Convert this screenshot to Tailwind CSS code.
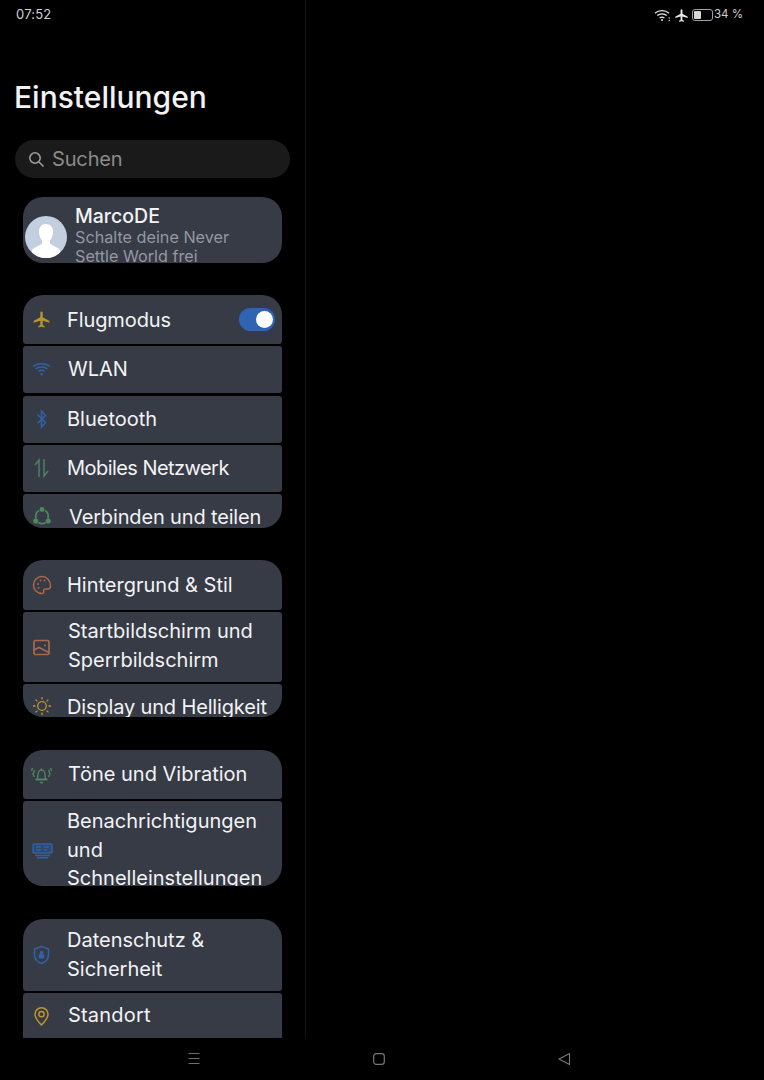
<!DOCTYPE html>
<html lang="de">
<head>
<meta charset="utf-8">
<script src="https://cdn.jsdelivr.net/npm/@tailwindcss/browser@4"></script>
</head>
<body class="bg-black">
<div class="relative w-[764px] h-[1080px] bg-black overflow-hidden font-['Inter','Noto_Sans',sans-serif] text-[#f2f3f5]">
  <!-- Status bar -->
  <div class="absolute top-0 left-0 right-0 h-[30px] flex items-center justify-between pl-[16px] pr-[21px] text-[11.5px] text-[#d0d0d0] z-10">
    <span class="text-[13px] tracking-[0.2px]">07:52</span>
    <div class="flex items-center">
      <svg class="w-[17px] h-[14px] mr-[3px]" viewBox="0 0 17 14" fill="none" stroke="#e8e8e8" stroke-width="1.3"><path d="M1 5.200C4.600 1.800 11.400 1.800 15 5.200"/><path d="M3.300 7.600C5.900 5.300 10.100 5.300 12.700 7.600"/><path d="M5.600 10C7 8.900 9 8.900 10.400 10"/><circle cx="8" cy="12" r="1" fill="#e8e8e8" stroke="none"/><circle cx="15.200" cy="12.400" r=".7" fill="#e8e8e8" stroke="none"/><circle cx="15.200" cy="10" r=".7" fill="#e8e8e8" stroke="none"/></svg>
      <svg class="w-[15px] h-[15px] mr-[3px]" viewBox="0 0 24 24" fill="#e8e8e8"><path d="M22 16v-2l-8.500-5V3.500A1.500 1.500 0 0 0 12 2a1.500 1.500 0 0 0-1.500 1.500V9L2 14v2l8.500-2.500V19L8 20.500V22l4-1 4 1v-1.500L13.500 19v-5.500z"/></svg>
      <div class="w-[21px] h-[12px] border border-[#9f9f9f] rounded-[3px] mr-[1px] p-[1px]"><div class="w-[7px] h-full bg-[#d8d8d8] rounded-[1px]"></div></div>
      <span>34 %</span>
    </div>
  </div>

  <!-- Settings column -->
  <aside class="w-[306px] h-[1038px] border-r border-[#141414] overflow-hidden">
    <h1 class="pt-[77px] pl-[14px] text-[30px] leading-[40px] font-medium text-[#f2f2f2]">Einstellungen</h1>

    <div class="mt-[23px] ml-[15px] w-[275px] h-[38px] rounded-full bg-[#1a1a1a] flex items-center pl-[13px] text-[20px] text-[#8b8b8b]">
      <svg class="w-[17px] h-[17px] mr-[7px]" viewBox="0 0 17 17" fill="none" stroke="#9a9a9a" stroke-width="1.6"><circle cx="7" cy="7" r="5.200"/><path d="M11 11l4.500 4.500"/></svg>
      <span class="mt-[-1px] tracking-[-0.15px]">Suchen</span>
    </div>

    <!-- Account -->
    <div class="mt-[19px] ml-[23px] w-[259px] h-[66px] rounded-[20px] bg-[#373b46] relative overflow-hidden flex items-start">
      <div class="ml-[2px] mt-[19px] w-[42px] h-[42px] rounded-full bg-[#c3cfdf] overflow-hidden shrink-0">
        <svg viewBox="0 0 42 42" class="w-[42px] h-[42px]"><path d="M21 8c-5 0-7.500 4-7 9 .3 3.200 1.500 5.500 3 7.500v3c-1.500 2-7 3-10 6.500v8h28v-8c-3-3.500-8.500-4.500-10-6.500v-3c1.500-2 2.700-4.300 3-7.500.5-5-2-9-7-9z" fill="#fff"/></svg>
      </div>
      <div class="ml-[8px] pt-[7px]">
        <div class="text-[19.5px] leading-[24px] font-medium text-[#f2f2f2]">MarcoDE</div>
        <div class="text-[16.200px] leading-[19px] text-[#9398a1] w-[180px]">Schalte deine Never Settle World frei</div>
      </div>
    </div>

    <!-- Group 1 -->
    <div class="mt-[32px] ml-[23px] w-[259px] flex flex-col gap-[2px] text-[20px]">
      <div class="h-[49px] rounded-t-[20px] rounded-b-[3px] bg-[#373b46] flex items-center pl-[9px] pr-[7px]">
        <svg class="w-[19px] h-[19px] mr-[16px] shrink-0" viewBox="0 0 24 24" fill="#b8962e"><path d="M22 16v-2l-8.500-5V3.500A1.500 1.500 0 0 0 12 2a1.500 1.500 0 0 0-1.500 1.500V9L2 14v2l8.500-2.500V19L8 20.500V22l4-1 4 1v-1.500L13.500 19v-5.500z"/></svg>
        <span class="flex-1 tracking-[-0.1px]">Flugmodus</span>
        <div class="w-[36px] h-[23px] rounded-full bg-[#2f64b5] flex items-center justify-end pr-[2px]"><div class="w-[17px] h-[17px] rounded-full bg-white"></div></div>
      </div>
      <div class="h-[47px] rounded-[3px] bg-[#373b46] flex items-center pl-[9px] mb-[1px]">
        <svg class="w-[19px] h-[15px] mr-[17px] shrink-0" viewBox="0 0 19 15" fill="none" stroke="#2f62a8" stroke-width="1.300"><path d="M1 4.500C5.500 .8 13.500 .8 18 4.500"/><path d="M3.500 7C7 4.300 12 4.300 15.500 7"/><path d="M6 9.500C8 8.100 11 8.100 13 9.500"/><circle cx="9.500" cy="12.300" r="1.200" fill="#2f62a8" stroke="none"/></svg>
        <span class="mt-[-2px]">WLAN</span>
      </div>
      <div class="h-[47px] rounded-[3px] bg-[#373b46] flex items-center pl-[9px]">
        <svg class="w-[19px] h-[20px] mr-[16px] mt-[-2px] shrink-0" viewBox="0 0 19 20" fill="none" stroke="#2f62a8" stroke-width="1.500"><path d="M5.500 5.500l8 8-4 4.500V2l4 4.500-8 8"/></svg>
        <span class="mt-[-2px]">Bluetooth</span>
      </div>
      <div class="h-[47px] rounded-[3px] bg-[#373b46] flex items-center pl-[9px]">
        <svg class="w-[19px] h-[20px] mr-[16px] mt-[-2px] shrink-0" viewBox="0 0 19 20" fill="none" stroke="#4f7f64" stroke-width="1.500"><path d="M7 19V2L3 7"/><path d="M12 1v17l4-5"/></svg>
        <span class="mt-[-2px] tracking-[-0.55px]">Mobiles Netzwerk</span>
      </div>
      <div class="h-[34px] rounded-t-[3px] rounded-b-[20px] bg-[#373b46] flex items-start pl-[9px] pt-[11px] overflow-hidden">
        <svg class="w-[20px] h-[20px] mr-[17px] mt-[1px] shrink-0" viewBox="0 0 20 20" fill="none" stroke="#4d8a5b" stroke-width="1.900"><path d="M4.200 12.500A6.500 6.500 0 0 1 7 4.500M13 4.500a6.500 6.500 0 0 1 2.800 8M6.500 16.500a6.500 6.500 0 0 0 7 0"/><circle cx="10" cy="3.500" r="2.400" fill="#4d8a5b" stroke="none"/><circle cx="3.800" cy="15" r="2.600" fill="#4d8a5b" stroke="none"/><circle cx="16.200" cy="15" r="2.600" fill="#4d8a5b" stroke="none"/></svg>
        <span class="leading-[25px] tracking-[-0.15px]">Verbinden und teilen</span>
      </div>
    </div>

    <!-- Group 2 -->
    <div class="mt-[32px] ml-[23px] w-[259px] flex flex-col gap-[2px] text-[20px]">
      <div class="h-[50px] rounded-t-[20px] rounded-b-[3px] bg-[#373b46] flex items-center pl-[9px]">
        <svg class="w-[20px] h-[20px] mr-[15px] shrink-0" viewBox="0 0 20 20" fill="none" stroke="#a9684a" stroke-width="1.500"><path d="M10 1.500a8.500 8.500 0 1 0 0 17c1.500 0 2-1 1.700-2-.4-1.200.2-2.500 1.800-2.500h2.500c1.500 0 2.500-1.200 2.500-3 0-5.500-3.800-9.500-8.500-9.500z"/><circle cx="6" cy="9" r="1" fill="#a9684a" stroke="none"/><circle cx="8.500" cy="5.500" r="1" fill="#a9684a" stroke="none"/><circle cx="12.500" cy="5.500" r="1" fill="#a9684a" stroke="none"/><circle cx="6.500" cy="13" r="1" fill="#a9684a" stroke="none"/></svg>
        <span class="mt-[-1px]">Hintergrund &amp; Stil</span>
      </div>
      <div class="h-[70px] rounded-[3px] bg-[#373b46] flex items-center pl-[9px]">
        <svg class="w-[19px] h-[19px] mr-[17px] shrink-0" viewBox="0 0 19 19" fill="none" stroke="#a9684a" stroke-width="1.700"><rect x="2" y="2.500" width="15" height="14" rx="1.500"/><path d="M2 12l5-2.500 10 5"/><path d="M12 7.500h2"/></svg>
        <span class="leading-[29px] w-[210px] mt-[-2px]">Startbildschirm und Sperrbildschirm</span>
      </div>
      <div class="h-[33px] rounded-t-[3px] rounded-b-[20px] bg-[#373b46] flex items-start pl-[9px] pt-[11px] overflow-hidden">
        <svg class="w-[20px] h-[20px] mr-[15px] mt-[1px] shrink-0" viewBox="0 0 20 20" fill="none" stroke="#b8962e" stroke-width="1.300"><circle cx="10" cy="10" r="4.300"/><path d="M10 1v2.500M10 16.500V19M1 10h2.500M16.500 10H19M3.600 3.600l1.800 1.800M14.600 14.600l1.800 1.800M3.600 16.400l1.800-1.800M14.600 5.400l1.800-1.800"/></svg>
        <span class="leading-[25px] tracking-[-0.15px]">Display und Helligkeit</span>
      </div>
    </div>

    <!-- Group 3 -->
    <div class="mt-[33px] ml-[23px] w-[259px] flex flex-col gap-[2px] text-[20px]">
      <div class="h-[49px] rounded-t-[20px] rounded-b-[3px] bg-[#373b46] flex items-center pl-[8px]">
        <svg class="w-[21px] h-[20px] mr-[16px] shrink-0" viewBox="0 0 21 20" fill="none" stroke="#4f8a66" stroke-width="1.300"><path d="M6 14.500c1-1.500 1-3 1-5 0-2.500 1.500-4.500 3.500-4.500S14 7 14 9.500c0 2 0 3.500 1 5z"/><path d="M4.500 14.500h12M9 17c.8.800 2.200.800 3 0M10.500 3.500V5"/><path d="M3.500 5 2 9l1.500 3M1.500 3 .5 6M17.500 5 19 9l-1.500 3M19.500 3l1 3"/></svg>
        <span class="mt-[-2px]">Töne und Vibration</span>
      </div>
      <div class="h-[85px] rounded-t-[3px] rounded-b-[20px] bg-[#373b46] flex items-start pl-[9px] overflow-hidden">
        <svg class="w-[21px] h-[17px] mr-[14px] mt-[41px] shrink-0" viewBox="0 0 21 17" fill="none" stroke="#2f62a8" stroke-width="1.500"><rect x="1" y="2" width="19" height="9" rx="1.500" fill="#2f62a8" fill-opacity=".35"/><path d="M4 5h5M4 8h5M12 5h5M12 8h3M3 13.500h15M5 15.800h11"/></svg>
        <span class="leading-[28.5px] w-[210px] mt-[6px]">Benachrichtigungen und Schnelleinstellungen</span>
      </div>
    </div>

    <!-- Group 4 -->
    <div class="mt-[33px] ml-[23px] w-[259px] flex flex-col gap-[2px] text-[20px]">
      <div class="h-[72px] rounded-t-[20px] rounded-b-[3px] bg-[#373b46] flex items-center pl-[9px]">
        <svg class="w-[19px] h-[20px] mr-[16px] shrink-0" viewBox="0 0 19 20" fill="none" stroke="#2f62a8" stroke-width="1.500"><path d="M9.500 1.500 2.500 4v6c0 4.200 3 7 7 8.500 4-1.500 7-4.300 7-8.500V4z"/><rect x="6.800" y="9" width="5.400" height="4.500" rx="1" fill="#2f62a8" stroke="none"/><circle cx="9.500" cy="7.500" r="1.800" fill="#2f62a8" stroke="none"/></svg>
        <span class="leading-[29px] w-[170px] mt-[-1px]">Datenschutz &amp; Sicherheit</span>
      </div>
      <div class="h-[60px] rounded-[3px] bg-[#373b46] flex items-start pl-[9px] pt-[10px]">
        <svg class="w-[19px] h-[20px] mr-[17px] mt-[3px] shrink-0" viewBox="0 0 19 20" fill="none" stroke="#b8962e" stroke-width="1.500"><path d="M9.500 19C6 15.500 3 12 3 8.200a6.500 6.500 0 0 1 13 0C16 12 13 15.500 9.500 19z"/><circle cx="9.500" cy="8.200" r="2.600"/></svg>
        <span class="leading-[25px] tracking-[0.2px]">Standort</span>
      </div>
    </div>
  </aside>

  <!-- Navigation bar -->
  <nav class="h-[42px] relative">
    <svg class="absolute left-[187px] top-[14px] w-[14px] h-[13px]" viewBox="0 0 14 13" fill="none" stroke="#6f6f6f" stroke-width="1"><path d="M1.500 1.500h11M1.500 6.500h11M1.500 11.500h11"/></svg>
    <svg class="absolute left-[372px] top-[14px] w-[14px] h-[14px]" viewBox="0 0 14 14" fill="none" stroke="#777" stroke-width="1.200"><rect x="1.700" y="1.700" width="10.600" height="10.600" rx="2.500"/></svg>
    <svg class="absolute left-[557px] top-[14px] w-[14px] h-[14px]" viewBox="0 0 14 14" fill="none" stroke="#777" stroke-width="1.100"><path d="M12.500 1.500v11L2 7z" stroke-linejoin="round"/></svg>
  </nav>
</div>
</body>
</html>
